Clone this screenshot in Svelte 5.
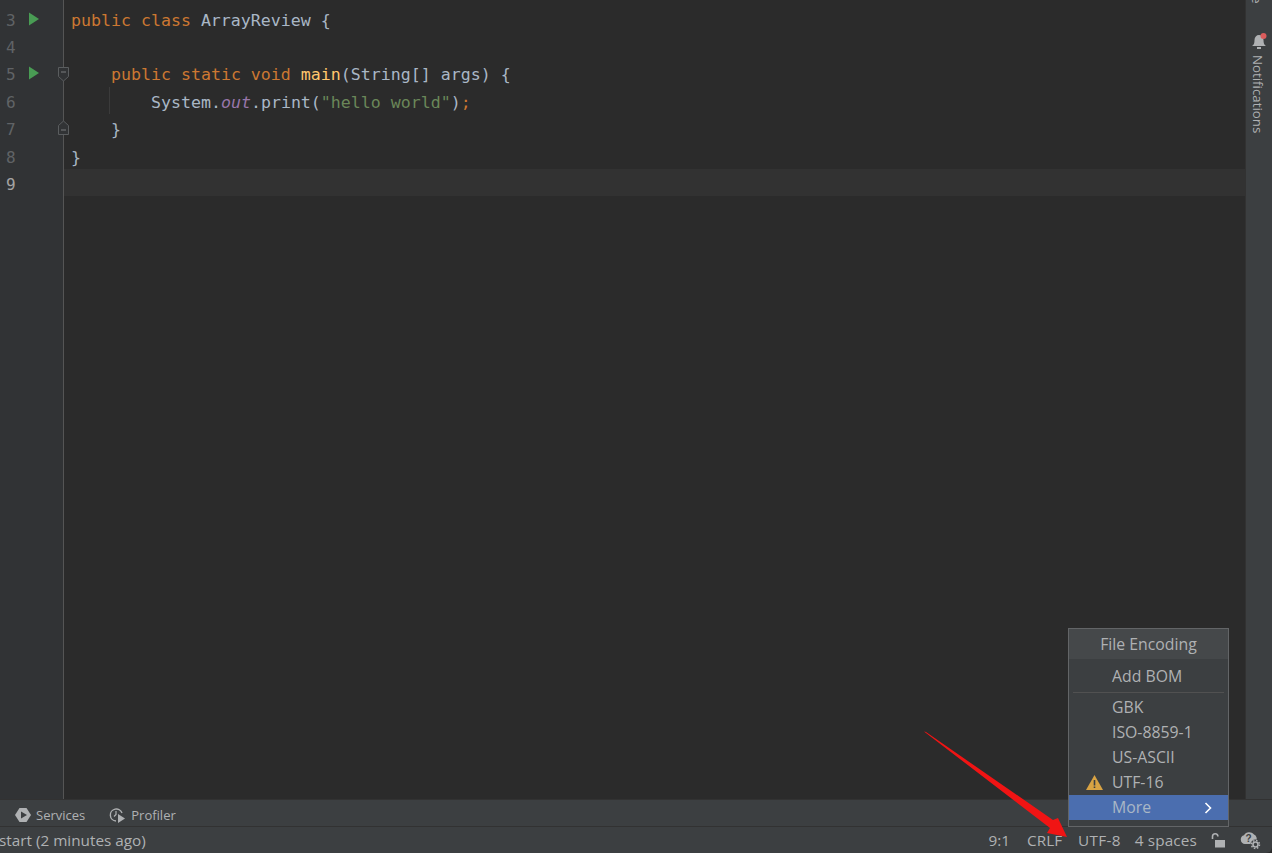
<script>
	const lines = [3, 4, 5, 6, 7, 8, 9];
	const encodings = ['GBK', 'ISO-8859-1', 'US-ASCII', 'UTF-16'];
</script>

<div class="ide">
	<div class="workspace">
		<div class="gutter">
			{#each lines as n}
				<div class="gutter-row" class:current={n === 9}>
					<span class="num">{n}</span>
					{#if n === 3 || n === 5}
						<svg class="run" width="12" height="14" viewBox="0 0 12 14"><path d="M1 .5 L11 7 L1 13.500 Z" fill="#499c54" /></svg>
					{/if}
					{#if n === 5}
						<svg class="fold" width="12" height="16" viewBox="0 0 12 16"><path d="M.5.5h10v9L5.500 14 .5 9.500z" fill="#313335" stroke="#5a5d5f" /><path d="M3 5h5" stroke="#7a7d7f" /></svg>
					{/if}
					{#if n === 7}
						<svg class="fold end" width="12" height="16" viewBox="0 0 12 16"><path d="M.5 15.500h10v-9L5.500 2 .5 6.500z" fill="#313335" stroke="#5a5d5f" /><path d="M3 11h5" stroke="#7a7d7f" /></svg>
					{/if}
				</div>
			{/each}
		</div>

		<div class="code">
			<div class="line"><span class="kw">public class</span> ArrayReview {'{'}</div>
			<div class="line"></div>
			<div class="line in1"><span class="kw">public static void</span> <span class="fn">main</span>(String[] args) {'{'}</div>
			<div class="line in2"><span class="guide"></span>System.<i class="field">out</i>.print(<span class="str">"hello world"</span>)<span class="kw">;</span></div>
			<div class="line in1">{'}'}</div>
			<div class="line">{'}'}</div>
			<div class="line current"></div>
		</div>

		<div class="sidebar">
			<span class="cut">e</span>
			<svg class="bell" width="16" height="18" viewBox="0 0 16 18">
				<path d="M1 13c2-1 2.500-3 2.500-6S5.500 2 8 2s4.500 2 4.500 5 .5 5 2.500 6z" fill="#afb1b3" />
				<path d="M6 14h4v2H6z" fill="#afb1b3" />
				<circle cx="12.500" cy="3" r="3" fill="#db5c5c" />
			</svg>
			<span class="vert">Notifications</span>
		</div>
	</div>

	<div class="toolbar">
		<span class="tool">
			<svg width="16" height="16" viewBox="0 0 16 16"><path d="M4.500 1h7L16 8l-4.500 7h-7L0 8z" fill="#afb1b3" /><path d="M6 4.500 L12 8 L6 11.500z" fill="#3c3f41" /></svg>
			Services
		</span>
		<span class="tool">
			<svg width="17" height="17" viewBox="0 0 17 17" fill="none"><path d="M7 14A6 6 0 1 1 13 6" stroke="#afb1b3" stroke-width="1.400" /><path d="M7 4v3.500l-2 2" stroke="#afb1b3" stroke-width="1.200" /><path d="M9 7l7 4.500L9 16z" fill="#afb1b3" /></svg>
			Profiler
		</span>
	</div>

	<div class="status">
		<span class="message">start (2 minutes ago)</span>
		<span class="item pos">9:1</span>
		<span class="item crlf">CRLF</span>
		<span class="item utf">UTF-8</span>
		<span class="item spaces">4 spaces</span>
		<svg class="lock" width="16" height="15" viewBox="0 0 16 15" fill="none"><path d="M2.500 6V3.500a2.700 2.700 0 0 1 5.400 0" stroke="#afb1b3" stroke-width="1.600" /><rect x="5" y="7" width="10" height="7.500" fill="#afb1b3" /></svg>
		<svg class="help" width="22" height="19" viewBox="0 0 22 19">
			<path d="M5 13A4.500 4.500 0 0 1 4 4.200 6 6 0 0 1 14 3.500a4.500 4.500 0 0 1 2 6.500l-4 3z" fill="#afb1b3" />
			<text x="5.500" y="10.500" font-size="10" font-weight="700" fill="#3c3f41" font-family="Liberation Sans, sans-serif">?</text>
			<circle cx="15.500" cy="13.500" r="5" fill="#3c3f41" />
			<circle cx="15.500" cy="13.500" r="2.500" fill="none" stroke="#afb1b3" stroke-width="1.600" />
			<circle cx="15.500" cy="13.500" r="4" fill="none" stroke="#afb1b3" stroke-width="1.500" stroke-dasharray="1.600 1.540" />
		</svg>
	</div>

	<div class="popup">
		<div class="popup-title">File Encoding</div>
		<div class="popup-row first">Add BOM</div>
		<div class="sep"></div>
		{#each encodings as enc}
			<div class="popup-row">
				{#if enc === 'UTF-16'}
					<svg class="warn" width="17" height="15" viewBox="0 0 17 15"><path d="M8.500 0 L17 15 H0z" fill="#d9a343" /><path d="M7.700 5h1.600v5.500H7.700zM7.700 11.500h1.600v1.600H7.700z" fill="#3c3f41" /></svg>
				{/if}
				{enc}
			</div>
		{/each}
		<div class="popup-row more">
			More
			<svg class="chev" width="8" height="12" viewBox="0 0 8 12" fill="none"><path d="M1.500 1l5 5-5 5" stroke="#fff" stroke-width="1.600" /></svg>
		</div>
		<div class="popup-foot"></div>
	</div>

	<svg class="arrow" width="180" height="133" viewBox="915 720 180 133">
		<path d="M924 731.500 L926 732 L1053 820 L1058 818 L1067 837 L1047 833 L1050 828z" fill="#f01414" />
	</svg>
</div>

<style>
	:global(body) {
		margin: 0;
		overflow: hidden;
	}

	.ide {
		position: relative;
		width: 1272px;
		height: 853px;
		display: flex;
		flex-direction: column;
		background: #2b2b2b;
		font-family: 'Open Sans', 'Noto Sans', sans-serif;
		font-size: 13px;
		color: #afb1b3;
		overflow: hidden;
	}

	.workspace {
		flex: 1;
		min-height: 0;
		display: flex;
	}

	.gutter {
		width: 63px;
		flex: none;
		padding-top: 4.6px;
		background: #313335;
		border-right: 1px solid #555;
		font-family: 'DejaVu Sans Mono', monospace;
		font-size: 16px;
		color: #606366;
	}

	.gutter-row {
		position: relative;
		height: 27.4px;
		line-height: 31px;
		padding-left: 6px;
	}

	.gutter-row.current {
		color: #a4a3a3;
	}

	.run {
		position: absolute;
		left: 28px;
		top: 7px;
	}

	.fold {
		position: absolute;
		left: 58px;
		top: 8px;
	}

	.fold.end {
		top: 5px;
	}

	.code {
		flex: 1;
		padding-top: 4.6px;
		font-family: 'DejaVu Sans Mono', monospace;
		font-size: 16.6px;
		color: #a9b7c6;
	}

	.line {
		position: relative;
		height: 27.4px;
		line-height: 31px;
		padding-left: 7px;
		white-space: pre;
	}

	.line.in1 {
		padding-left: 47px;
	}

	.line.in2 {
		padding-left: 87px;
	}

	.line.current {
		background: #323232;
	}

	.guide {
		position: absolute;
		left: 45px;
		top: 0;
		bottom: 0;
		border-left: 1px solid #3b3b3b;
	}

	.kw {
		color: #cc7832;
	}

	.fn {
		color: #ffc66d;
	}

	.field {
		color: #9876aa;
	}

	.str {
		color: #6a8759;
	}

	.sidebar {
		width: 27px;
		flex: none;
		position: relative;
		background: #3c3f41;
		border-left: 1px solid #323232;
		box-sizing: border-box;
	}

	.cut {
		position: absolute;
		left: 7px;
		top: -9px;
		transform: rotate(90deg);
	}

	.bell {
		position: absolute;
		left: 5px;
		top: 33px;
	}

	.vert {
		position: absolute;
		left: 3px;
		top: 55px;
		writing-mode: vertical-rl;
		font-size: 13.3px;
	}

	.toolbar {
		height: 22px;
		flex: none;
		display: flex;
		align-items: center;
		gap: 24px;
		padding: 4px 0 0 15px;
		background: #3c3f41;
		border-top: 1px solid #323232;
		border-bottom: 1px solid #323232;
	}

	.tool {
		display: flex;
		align-items: center;
		gap: 5px;
	}

	.status {
		height: 26px;
		flex: none;
		display: flex;
		align-items: center;
		background: #3c3f41;
		font-size: 15.3px;
		border-bottom-right-radius: 6px;
	}

	.message {
		margin-left: -1px;
		margin-right: auto;
	}

	.item {
		white-space: nowrap;
	}

	.crlf {
		margin-left: 17px;
	}

	.utf {
		margin-left: 16px;
		letter-spacing: 0.3px;
	}

	.spaces {
		margin-left: 14px;
		letter-spacing: 0.15px;
	}

	.lock {
		margin-left: 13px;
	}

	.help {
		margin-left: 14px;
		margin-right: 10px;
	}

	.popup {
		position: absolute;
		left: 1068px;
		top: 628px;
		width: 159px;
		background: #3c3f41;
		border: 1px solid #636567;
		font-size: 15.8px;
	}

	.popup-title {
		height: 30px;
		line-height: 30px;
		text-align: center;
		background: #45484a;
	}

	.popup-row {
		position: relative;
		height: 25px;
		line-height: 25px;
		padding-left: 43px;
	}

	.popup-row.first {
		height: 33px;
		line-height: 35px;
	}

	.sep {
		height: 1px;
		margin: 0 4px 2px 4px;
		background: #515151;
	}

	.warn {
		position: absolute;
		left: 17px;
		top: 5px;
	}

	.more {
		background: #4b6eaf;
		color: #a9b7c6;
	}

	.chev {
		position: absolute;
		right: 16px;
		top: 7px;
	}

	.popup-foot {
		height: 6px;
	}

	.arrow {
		position: absolute;
		left: 915px;
		top: 720px;
	}
</style>
